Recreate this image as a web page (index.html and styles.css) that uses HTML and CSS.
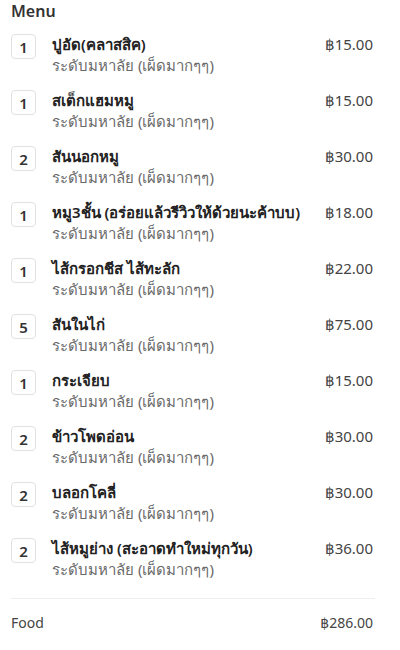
FILE: index.html
```html
<!DOCTYPE html>
<html lang="th">
<head>
<meta charset="utf-8">
<link rel="stylesheet" href="styles.css">
</head>
<body>
<div class="page">
  <h2 class="title">Menu</h2>
  <ul class="items">
    <li class="item"><span class="qty">1</span><div class="info"><div class="name">ปูอัด(คลาสสิค)</div><div class="sub">ระดับมหาลัย (เผ็ดมากๆๆ)</div></div><span class="price">฿15.00</span></li>
    <li class="item"><span class="qty">1</span><div class="info"><div class="name">สเต็กแฮมหมู</div><div class="sub">ระดับมหาลัย (เผ็ดมากๆๆ)</div></div><span class="price">฿15.00</span></li>
    <li class="item"><span class="qty">2</span><div class="info"><div class="name">สันนอกหมู</div><div class="sub">ระดับมหาลัย (เผ็ดมากๆๆ)</div></div><span class="price">฿30.00</span></li>
    <li class="item"><span class="qty">1</span><div class="info"><div class="name">หมู3ชั้น (อร่อยแล้วรีวิวให้ด้วยนะค้าบบ)</div><div class="sub">ระดับมหาลัย (เผ็ดมากๆๆ)</div></div><span class="price">฿18.00</span></li>
    <li class="item"><span class="qty">1</span><div class="info"><div class="name">ไส้กรอกชีส ไส้ทะลัก</div><div class="sub">ระดับมหาลัย (เผ็ดมากๆๆ)</div></div><span class="price">฿22.00</span></li>
    <li class="item"><span class="qty">5</span><div class="info"><div class="name">สันในไก่</div><div class="sub">ระดับมหาลัย (เผ็ดมากๆๆ)</div></div><span class="price">฿75.00</span></li>
    <li class="item"><span class="qty">1</span><div class="info"><div class="name">กระเจียบ</div><div class="sub">ระดับมหาลัย (เผ็ดมากๆๆ)</div></div><span class="price">฿15.00</span></li>
    <li class="item"><span class="qty">2</span><div class="info"><div class="name">ข้าวโพดอ่อน</div><div class="sub">ระดับมหาลัย (เผ็ดมากๆๆ)</div></div><span class="price">฿30.00</span></li>
    <li class="item"><span class="qty">2</span><div class="info"><div class="name">บลอกโคลี่</div><div class="sub">ระดับมหาลัย (เผ็ดมากๆๆ)</div></div><span class="price">฿30.00</span></li>
    <li class="item"><span class="qty">2</span><div class="info"><div class="name">ไส้หมูย่าง (สะอาดทำใหม่ทุกวัน)</div><div class="sub">ระดับมหาลัย (เผ็ดมากๆๆ)</div></div><span class="price">฿36.00</span></li>
  </ul>
  <div class="total"><span>Food</span><span>฿286.00</span></div>
</div>
</body>
</html>
```
FILE: styles.css
```css
* { box-sizing: border-box; }
body {
  margin: 0;
  background: #fff;
  font-family: "Noto Sans", "DejaVu Sans", sans-serif;
  color: #222;
}
.page {
  padding: 0 25px 0 11px;
}
.title {
  margin: 0;
  padding-top: 1px;
  height: 32px;
  font-size: 16px;
  font-weight: 600;
  line-height: 20px;
  color: #333;
}
.items {
  list-style: none;
  margin: 0;
  padding: 0;
}
.item {
  display: flex;
  align-items: flex-start;
  height: 56px;
  padding-top: 2px;
}
.qty {
  flex: none;
  width: 25px;
  height: 25px;
  border: 1px solid #e2e2e2;
  border-radius: 4px;
  display: flex;
  align-items: center;
  justify-content: center;
  font-size: 15px;
  font-weight: 600;
  color: #333;
}
.info {
  flex: 1;
  margin-left: 16px;
}
.name {
  font-size: 15px;
  font-weight: 600;
  line-height: 21px;
  color: #222;
}
.sub {
  font-size: 15px;
  line-height: 21px;
  color: #6a6a6a;
}
.price {
  flex: none;
  font-size: 15px;
  line-height: 21px;
  color: #444;
  margin-right: 2px;
}
.total {
  margin-top: 6px;
  border-top: 1px solid #eee;
  display: flex;
  justify-content: space-between;
  padding: 14px 2px 0 0;
  font-size: 14px;
  color: #444;
}
```
